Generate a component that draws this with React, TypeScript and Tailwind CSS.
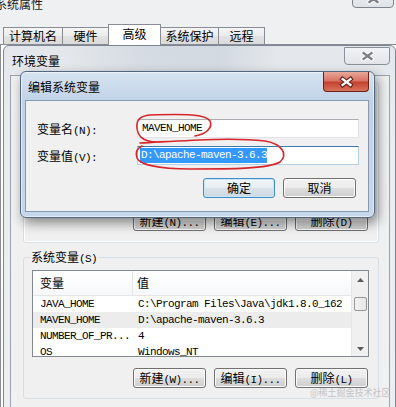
import React from 'react';

const zh = "font-['Noto_Sans_CJK_SC',sans-serif]";
const mono = "font-['Liberation_Mono',monospace] text-[11px] tracking-[-0.6px]";

const rows = [
  ['JAVA_HOME', 'C:\\Program Files\\Java\\jdk1.8.0_162'],
  ['MAVEN_HOME', 'D:\\apache-maven-3.6.3'],
  ['NUMBER_OF_PR...', '4'],
  ['OS', 'Windows_NT'],
];

function Lbl({ z, e }: { z: string; e?: string }) {
  return (
    <span className="whitespace-nowrap text-[12px] leading-[16px]">
      <span className={zh}>{z}</span>
      {e && <span className={`${mono} leading-none`}>{e}</span>}
    </span>
  );
}

function XGlyph({ fill, edge }: { fill: string; edge: string }) {
  return (
    <svg width="15" height="12" viewBox="0 0 15 12">
      <path d="M3.5 3 L11.5 9 M11.5 3 L3.5 9" stroke={edge} strokeWidth="4.4" strokeLinecap="square" fill="none" />
      <path d="M3.5 3 L11.5 9 M11.5 3 L3.5 9" stroke={fill} strokeWidth="2.2" strokeLinecap="square" fill="none" />
    </svg>
  );
}

function Btn({ children, w = 'w-[73px]', def = false }: { children: React.ReactNode; w?: string; def?: boolean }) {
  return (
    <div
      className={`${w} h-[20px] shrink-0 rounded-[3px] border flex items-center justify-center text-black text-[12px] leading-[16px] ${
        def
          ? 'border-[#3c8fc9] bg-[linear-gradient(180deg,#f1f5f8_0%,#e6edf2_50%,#d9e2e9_51%,#cfd9e2_100%)] shadow-[inset_0_0_0_1px_#c9e6f7]'
          : 'border-[#707070] bg-[linear-gradient(180deg,#f2f2f2_0%,#ebebeb_50%,#dddddd_51%,#cfcfcf_100%)] shadow-[inset_0_0_0_1px_#fbfbfb]'
      }`}
    >
      {children}
    </div>
  );
}

function Tab({ label, w, active = false }: { label: string; w: string; active?: boolean }) {
  if (active) {
    return (
      <div className={`${w} h-[21px] -mb-px -ml-px relative z-10 bg-white border border-b-0 border-[#898c95] flex items-center justify-center pb-[3px] text-[12px] leading-[16px]`}>
        {label}
      </div>
    );
  }
  return (
    <div className={`${w} h-[17px] -ml-px bg-[linear-gradient(180deg,#f5f5f5,#ebebeb_50%,#e2e2e2_51%,#dadada)] border border-b-0 border-[#898c95] flex items-center justify-center text-[12px] leading-[16px]`}>
      {label}
    </div>
  );
}

function Arrow({ up }: { up?: boolean }) {
  return (
    <svg width="7" height="4" viewBox="0 0 7 4">
      <path d={up ? 'M0 4 L3.5 0 L7 4 Z' : 'M0 0 L3.5 4 L7 0 Z'} fill="#5a5a5a" />
    </svg>
  );
}

export default function App() {
  return (
    <div className={`relative w-[396px] h-[407px] overflow-hidden bg-[#eef0f2] text-black ${zh}`}>
      {/* 系统属性 */}
      <div className="flex flex-col h-full">
        <div className="h-[24px] flex justify-between items-start">
          <span className="-ml-[5px] -mt-[4px] text-[12px] leading-[16px] text-[#1a1a1a]">系统属性</span>
          <div className="w-[42px] h-[19px] -mt-[11px] mr-[2px] rounded-b-[4px] border border-[#7d848c] bg-[linear-gradient(180deg,#eef0f2,#dfe3e7)] flex items-center justify-center">
            <XGlyph fill="#7b7f85" edge="#f4f4f4" />
          </div>
        </div>
        <div className="h-[20px] flex items-end pl-[4px]">
          <Tab label="计算机名" w="w-[60px]" />
          <Tab label="硬件" w="w-[47px]" />
          <Tab label="高级" w="w-[53px]" active />
          <Tab label="系统保护" w="w-[59px]" />
          <Tab label="远程" w="w-[47px]" />
        </div>
        <div className="flex-1 border-t border-l border-[#898c95] bg-white" />
      </div>

      {/* 环境变量 */}
      <div className="absolute left-[3px] top-[45px] w-[393px] h-[370px] rounded-t-[6px] border border-[#7d8794] bg-[linear-gradient(180deg,#e3e7eb,#e9ecef_20%,#eceef1)] flex flex-col">
        <div className="h-[29px] flex justify-between items-start bg-[linear-gradient(90deg,transparent_15%,rgba(150,165,185,0.18)_35%,rgba(150,165,185,0.22)_55%,transparent_70%)]">
          <span className="ml-[8px] mt-[7px] text-[12px] leading-[16px]">环境变量</span>
          <div className="w-[46px] h-[18px] mt-[1px] mr-[5px] rounded-b-[4px] border border-[#8a9098] bg-[linear-gradient(180deg,#f1f3f5,#e1e5e9)] flex items-center justify-center">
            <XGlyph fill="#7b7f85" edge="#fafafa" />
          </div>
        </div>
        <div className="flex-1 ml-[6px] mr-[5px] border border-[#9aa3ae] bg-[#f0f0f0] flex flex-col">
          <div className="mt-[7px] ml-[12px] mr-[10px] h-[160px] rounded-[3px] border border-[#d5dfe5] shadow-[inset_0_0_0_1px_#ffffff] flex flex-col justify-end">
            <div className="flex justify-end gap-[8px] pr-[10px] pb-[11px]">
              <Btn><Lbl z="新建" e="(N)..." /></Btn>
              <Btn><Lbl z="编辑" e="(E)..." /></Btn>
              <Btn><Lbl z="删除" e="(D)" /></Btn>
            </div>
          </div>
          <fieldset className="mt-[6px] ml-[12px] mr-[10px] h-[150px] rounded-[3px] border border-[#d5dfe5] flex flex-col">
            <legend className="ml-[6px] px-[1px] text-[12px] leading-[16px]">
              <Lbl z="系统变量" e="(S)" />
            </legend>
            <div className="mt-[5px] ml-[8px] w-[337px] h-[87px] border border-[#828790] bg-white flex">
              <div className="flex-1 flex flex-col overflow-hidden">
                <div className="h-[25px] shrink-0 flex border-b border-[#e5e5e5] bg-[linear-gradient(180deg,#ffffff,#f6f7f9)]">
                  <div className="w-[100px] border-r border-[#e3e5e8] pl-[7px] flex items-center text-[12px] leading-[16px]">变量</div>
                  <div className="pl-[4px] flex items-center text-[12px] leading-[16px]">值</div>
                </div>
                {rows.map((r, i) => (
                  <div key={r[0]} className={`h-[16px] shrink-0 flex items-center ${i === 1 ? 'bg-[#ececec]' : ''}`}>
                    <div className={`w-[101px] pl-[7px] ${mono} leading-[16px] whitespace-nowrap`}>{r[0]}</div>
                    <div className={`pl-[4px] ${mono} leading-[16px] whitespace-nowrap`}>{r[1]}</div>
                  </div>
                ))}
              </div>
              <div className="w-[17px] shrink-0 bg-[#f0f0f0] border-l border-[#e6e6e6] flex flex-col items-center">
                <div className="h-[17px] flex items-center justify-center">
                  <Arrow up />
                </div>
                <div className="mt-[9px] w-[13px] h-[14px] rounded-[2px] border border-[#979797] bg-[linear-gradient(90deg,#f3f3f3,#e6e6e6)]" />
                <div className="flex-1" />
                <div className="h-[15px] flex items-center justify-center">
                  <Arrow />
                </div>
              </div>
            </div>
            <div className="mt-[11px] flex justify-end gap-[8px] pr-[10px]">
              <Btn><Lbl z="新建" e="(W)..." /></Btn>
              <Btn><Lbl z="编辑" e="(I)..." /></Btn>
              <Btn><Lbl z="删除" e="(L)" /></Btn>
            </div>
          </fieldset>
        </div>
      </div>

      {/* 编辑系统变量 */}
      <div className="absolute left-[20px] top-[71px] w-[355px] h-[147px] rounded-[6px] border border-[#51677f] bg-[linear-gradient(180deg,#d6e3f0_0%,#c0d2e7_22%,#c6d7ea_100%)] shadow-[3px_5px_12px_rgba(0,0,0,0.45),inset_0_0_0_1px_rgba(255,255,255,0.55)] flex flex-col">
        <div className="h-[28px] flex justify-between items-start">
          <span className="ml-[7px] mt-[7px] text-[12px] leading-[16px]">编辑系统变量</span>
          <div className="w-[46px] h-[20px] mr-[5px] rounded-b-[4px] border border-[#6b2419] border-t-0 bg-[linear-gradient(180deg,#e8a89a_0%,#d87565_45%,#c4432e_55%,#d9725d_100%)] flex items-center justify-center">
            <XGlyph fill="#ffffff" edge="#5e2218" />
          </div>
        </div>
        <div className="h-[112px] ml-[4px] mr-[5px] border border-[#8799b0] bg-[#f0f0f0] pt-[18px] pb-[13px] flex flex-col">
          <div className="flex items-center">
            <div className="w-[111px] pl-[11px] h-[19px] flex items-center">
              <Lbl z="变量名" e="(N):" />
            </div>
            <div className="w-[222px] h-[19px] border border-[#e2e3ea] border-t-[#abadb3] bg-white pl-[4px] flex items-center">
              <span className={`${mono} leading-[15px]`}>MAVEN_HOME</span>
            </div>
          </div>
          <div className="mt-[8px] flex items-center">
            <div className="w-[111px] pl-[11px] h-[19px] flex items-center">
              <Lbl z="变量值" e="(V):" />
            </div>
            <div className="w-[222px] h-[19px] border border-[#b5cfe7] border-t-[#3d7bad] bg-white pl-[2px] flex items-center">
              <span className={`${mono} leading-[15px] bg-[#3399ff] text-white pl-[1px]`}>D:\apache-maven-3.6.3</span>
            </div>
          </div>
          <div className="mt-[13px] flex justify-end gap-[8px] pr-[12px]">
            <Btn w="w-[72px]" def>确定</Btn>
            <Btn w="w-[73px]">取消</Btn>
          </div>
        </div>
      </div>

      {/* 红色标注 */}
      <svg className="absolute inset-0 pointer-events-none" width="396" height="407" viewBox="0 0 396 407">
        <path
          d="M195 136 C207 134 213 127 210 121 C206 114 185 114 150 115 C140 116 136 120 137 128 C138 136 142 141 155 142"
          stroke="#d7262a"
          strokeWidth="1.6"
          fill="none"
          strokeLinecap="round"
        />
        <path
          d="M140 143 C180 141 230 137 265 141 C283 144 288 155 280 162 C268 169 230 169 190 169 C160 169 140 165 137 158 C135 152 138 148 142 146"
          stroke="#d7262a"
          strokeWidth="1.6"
          fill="none"
          strokeLinecap="round"
        />
      </svg>

      <div className="absolute left-[310px] top-[388px] text-[9px] leading-[10px] text-[#c4c4c4] whitespace-nowrap">@稀土掘金技术社区</div>
    </div>
  );
}
